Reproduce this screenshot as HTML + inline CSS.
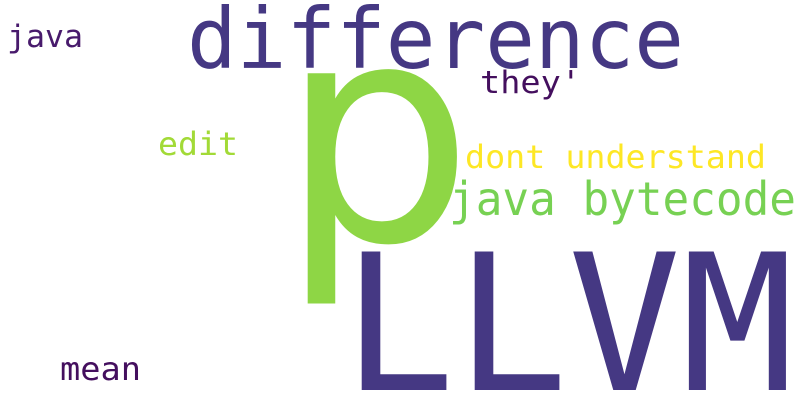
<!DOCTYPE html>
<html><head><meta charset="utf-8"><style>
html,body{margin:0;padding:0;background:#fff;overflow:hidden;}
svg{display:block;}
text{font-family:"DejaVu Sans Mono","Liberation Mono",monospace;}
</style></head><body>
<svg width="800" height="400" viewBox="0 0 800 400" xmlns="http://www.w3.org/2000/svg">
<rect width="800" height="400" fill="#fff"/>
<text x="187" y="68" font-size="84" fill="#453883" textLength="497" lengthAdjust="spacingAndGlyphs">difference</text>
<text x="7" y="47" font-size="31" fill="#481a6c" textLength="76" lengthAdjust="spacingAndGlyphs">java</text>
<text x="480" y="93" font-size="31" fill="#440f5e" textLength="101" lengthAdjust="spacingAndGlyphs">they'</text>
<text x="280" y="240" font-size="305" fill="#8ed645" style="font-family:'DejaVu Sans',sans-serif">p</text>
<text x="158" y="155" font-size="32" fill="#a2da37" textLength="80" lengthAdjust="spacingAndGlyphs">edit</text>
<text x="465" y="168" font-size="32" fill="#fde725" textLength="301" lengthAdjust="spacingAndGlyphs">dont understand</text>
<text x="449" y="215" font-size="46" fill="#77d153" textLength="347" lengthAdjust="spacingAndGlyphs">java bytecode</text>
<text x="342" y="390" font-size="190" fill="#453883" textLength="452" lengthAdjust="spacingAndGlyphs">LLVM</text>
<text x="60" y="380" font-size="32" fill="#440f5e" textLength="81" lengthAdjust="spacingAndGlyphs">mean</text>
</svg>
</body></html>
